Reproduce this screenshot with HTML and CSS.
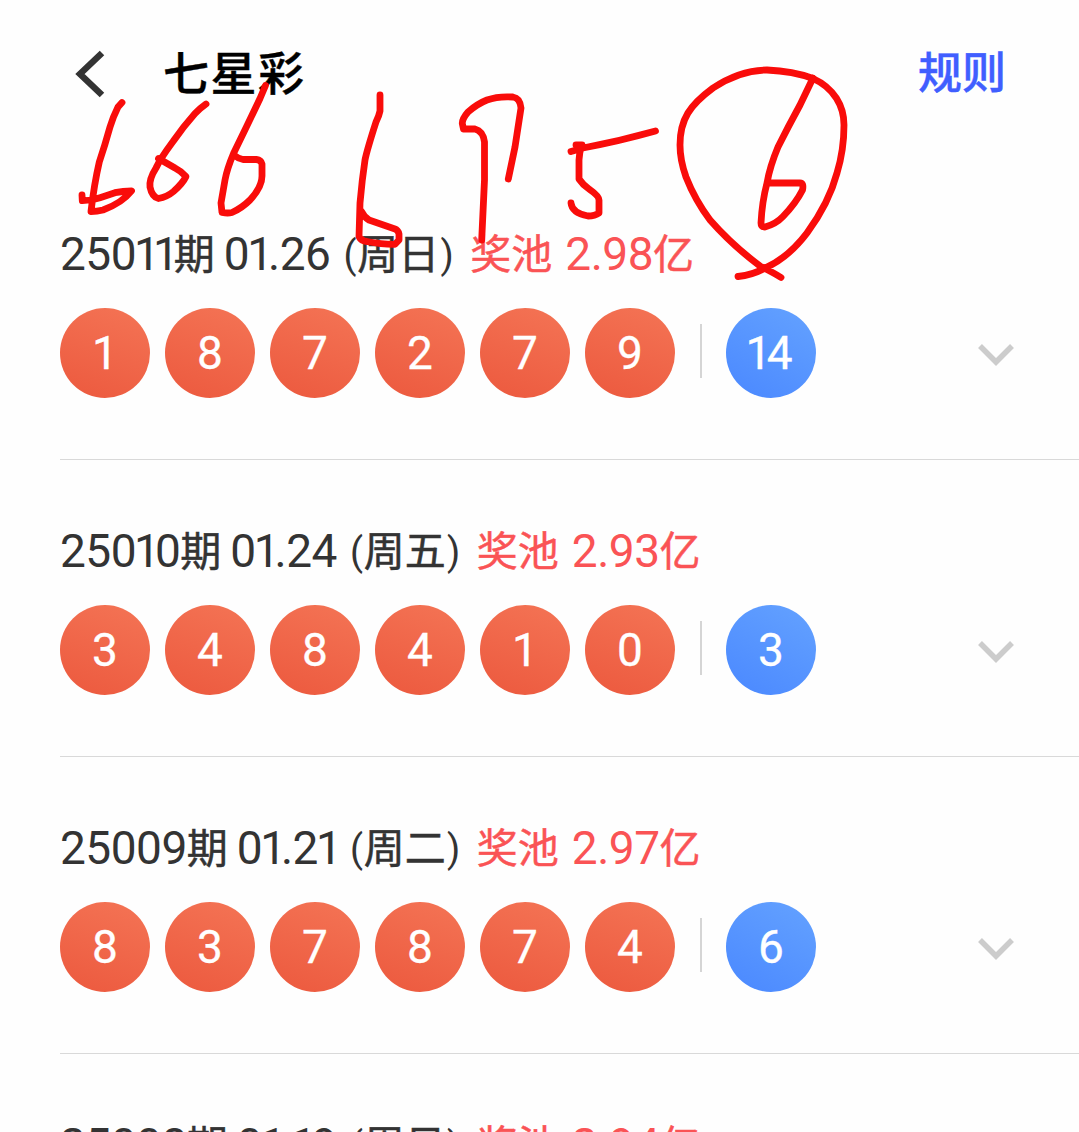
FILE: index.html
```html
<!DOCTYPE html>
<html lang="zh-CN">
<head>
<meta charset="utf-8">
<title>七星彩</title>
<link rel="stylesheet" href="styles.css">
</head>
<body>
<header class="topbar">
  <svg class="back" viewBox="0 0 30 50" width="30" height="50"><path d="M27 4 5 25l22 21"/></svg>
  <h1 class="title">七星彩</h1>
  <a class="rules">规则</a>
</header>
<main class="draws">
  <section class="draw">
    <div class="info"><span class="issue">250<i>1</i><i>1</i><b>期</b></span><span class="date">0<i>1</i>.26</span><span class="day"><u>(</u><b>周日</b><u>)</u></span><span class="pool"><b>奖池</b><span class="amount">2.98<b>亿</b></span></span></div>
    <div class="balls"><span class="ball">1</span><span class="ball">8</span><span class="ball">7</span><span class="ball">2</span><span class="ball">7</span><span class="ball">9</span><span class="sep"></span><span class="ball blue"><i>1</i>4</span><svg class="chevron" viewBox="0 0 36 22" width="36" height="22"><path d="m2 2 16 16L34 2"/></svg></div>
  </section>
  <section class="draw">
    <div class="info"><span class="issue">250<i>1</i>0<b>期</b></span><span class="date">0<i>1</i>.24</span><span class="day"><u>(</u><b>周五</b><u>)</u></span><span class="pool"><b>奖池</b><span class="amount">2.93<b>亿</b></span></span></div>
    <div class="balls"><span class="ball">3</span><span class="ball">4</span><span class="ball">8</span><span class="ball">4</span><span class="ball">1</span><span class="ball">0</span><span class="sep"></span><span class="ball blue">3</span><svg class="chevron" viewBox="0 0 36 22" width="36" height="22"><path d="m2 2 16 16L34 2"/></svg></div>
  </section>
  <section class="draw">
    <div class="info"><span class="issue">25009<b>期</b></span><span class="date">0<i>1</i>.2<i>1</i></span><span class="day"><u>(</u><b>周二</b><u>)</u></span><span class="pool"><b>奖池</b><span class="amount">2.97<b>亿</b></span></span></div>
    <div class="balls"><span class="ball">8</span><span class="ball">3</span><span class="ball">7</span><span class="ball">8</span><span class="ball">7</span><span class="ball">4</span><span class="sep"></span><span class="ball blue">6</span><svg class="chevron" viewBox="0 0 36 22" width="36" height="22"><path d="m2 2 16 16L34 2"/></svg></div>
  </section>
  <section class="draw">
    <div class="info"><span class="issue">25008<b>期</b></span><span class="date">0<i>1</i>.<i>1</i>9</span><span class="day"><u>(</u><b>周日</b><u>)</u></span><span class="pool"><b>奖池</b><span class="amount">2.94<b>亿</b></span></span></div>
  </section>
</main>
<svg class="ink" viewBox="0 0 1079 300" width="1079" height="300">
  <path d="M122 102.500L118 107Q113 117 110 127Q105 145 99.300 162Q94 185 91 211.500Q97 211.500 103 210Q122 203 131.500 191Q123 191 115 192.700L100 197.700Q92 200.500 82.300 200.700L82 195"/>
  <path d="M206 104Q199 109 195 113.500Q183 127 173 141.500Q160 159 156 168Q149 179 150 187Q152 197 158.500 198.500Q167 197 173.500 191.500Q183 183 186 176.500Q181 171 175 168L158.500 158.500"/>
  <path d="M265.500 85.500L260 98.500Q247 126 233.500 153.500Q227 169 225 180L221 203L222 212.500Q228 213.500 232 212.500Q242 208 250 200Q262 187 262 176V164Q261 160 256.500 159.500H243Q238 158.500 234.500 155.500"/>
  <path d="M380 95V111Q379 116 376 122Q367 150 365 160Q362 180 360 203L359 236.500Q361 241 367 241.500Q383 244.500 395 244.300L399 240V234Q398 230 395 229L369 220Q364 217 361.500 211.500"/>
  <path d="M508.300 179L515 147L521 108Q520 98 513 97Q498 96 487 100Q477 104 468 112Q462 119 462.300 123.500L463.500 129H475Q483 131 484.500 142V180L481.700 240"/>
  <path d="M655.500 131Q620 141 583 148L571 151.500M576 145H582Q579 153 579 160V179Q583 185 589 189Q599 196 599 200V213Q595 216 588 216Q572 213 571 203"/>
  <path d="M781 277.500Q774 273 760 266Q732 245 710 220Q695 200 686 177Q680 160 680 145C680 119 690 105 713 88Q740 70 767 70Q793 71 813 78.500C834 88 844 106 844 125Q844 150 837 173Q829 203 807 233Q788 258 765 268Q753 275 738 276.500"/>
  <path d="M813 78L800 105Q788 127 778 147Q770 166 767 183Q762 202 761 223Q761 227 765 227Q776 224 783 216.500Q796 203 802.500 190Q804 183 800 183H767"/>
</svg>
</body>
</html>
```
FILE: styles.css
```css
* { box-sizing: border-box; }
body {
  margin: 0;
  height: 1132px;
  overflow: hidden;
  position: relative;
  background: #fefefe;
  color: #333;
  font-family: Roboto, "Noto Sans CJK SC", sans-serif;
}
i, b, u { font-style: normal; font-weight: inherit; text-decoration: none; }
.topbar {
  height: 163px;
  display: flex;
  align-items: flex-start;
  padding: 49px 73px 0 75px;
}
.back { flex: none; fill: none; stroke: #333; stroke-width: 6.5; }
.title {
  margin: 0 0 0 58px;
  font-size: 46px;
  line-height: 50px;
  letter-spacing: 1.5px;
  font-weight: 500;
  color: #000;
  -webkit-text-stroke: 0.4px;
}
.rules {
  margin: 0 0 0 auto;
  font-size: 44px;
  line-height: 50px;
  font-weight: 500;
  color: #405eff;
  -webkit-text-stroke: 0.4px;
}
.draw {
  height: 297px;
  margin-left: 60px;
  padding-top: 61px;
  border-bottom: 1px solid #d9d9d9;
}
.info {
  display: flex;
  height: 60px;
  line-height: 60px;
  font-size: 46px;
  letter-spacing: -0.5px;
  white-space: nowrap;
}
.info b {
  font-size: 41px;
  line-height: 1;
  letter-spacing: 0;
  vertical-align: 1px;
  -webkit-text-stroke: 0.5px;
}
.info u {
  display: inline-block;
  font-size: 38px;
  line-height: 1;
  width: 15px;
  text-align: center;
  vertical-align: 2px;
}
.info i { margin: 0 -4.5px 0 -2px; }
.ball i { margin: 0 -4.5px 0 -4px; }
.date { margin-left: 9px; }
.day { margin-left: 12px; }
.pool { margin-left: 16px; color: #fa5355; }
.amount { margin-left: 13px; }
.balls {
  display: flex;
  align-items: center;
  gap: 15px;
  height: 90px;
  margin-top: 24px;
}
.ball {
  width: 90px;
  height: 90px;
  border-radius: 50%;
  background: linear-gradient(200deg, #f47455, #ec593e);
  color: #fff;
  font-size: 46px;
  line-height: 90px;
  text-align: center;
  -webkit-text-stroke: 0.3px;
}
.blue { background: linear-gradient(210deg, #64a2ff, #4a88ff); }
.sep { width: 2px; height: 54px; margin: -4px 9px 0 10px; background: #d5d5d5; }
.chevron { margin: 4px 65px 0 auto; fill: none; stroke: #ccc; stroke-width: 5.5; }
.ink {
  position: absolute;
  left: 0;
  top: 0;
  fill: none;
  stroke: #f90c0a;
  stroke-width: 6.8;
  stroke-linecap: round;
  stroke-linejoin: round;
}
```
